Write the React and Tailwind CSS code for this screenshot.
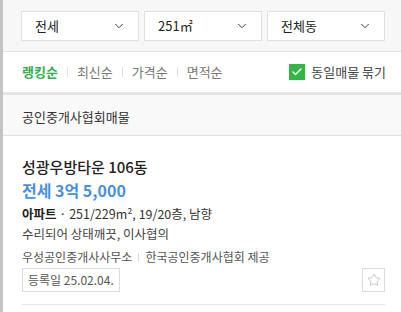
import { ChevronDown, Check, Star } from 'lucide-react'

const filters = ['전세', '251㎡', '전체동']
const sorts = ['랭킹순', '최신순', '가격순', '면적순']

export default function App() {
  return (
    <div
      className="w-[401px] h-[312px] overflow-hidden bg-white border-l-[3px] border-[#c4c4c4] text-[#222]"
      style={{ fontFamily: '"Noto Sans CJK KR", "Noto Sans", sans-serif' }}
    >
      {/* Filters */}
      <div className="h-[52px] bg-[#f7f7f7] border-b border-[#e2e2e2] pl-[18px] pr-[14px] pt-[11px] flex gap-[5px]">
        {filters.map((f) => (
          <div
            key={f}
            className="w-[118px] h-[30px] bg-white border border-[#e0e0e0] flex items-center justify-between pl-[13px] pr-[12px] text-[13px]"
          >
            <span>{f}</span>
            <ChevronDown className="h-[14px] w-[14px] text-[#333]" strokeWidth={1.6} />
          </div>
        ))}
      </div>

      {/* Sort */}
      <div className="h-[43px] flex items-center justify-between pl-[19px] pr-[15px] border-b-[3px] border-[#e4e4e4]">
        <div className="flex items-center text-[13px]">
          {sorts.map((s, i) => (
            <div key={s} className="flex items-center">
              {i > 0 && <span className="w-px h-[10px] bg-[#dedede] mx-[9px]" />}
              <span className={i === 0 ? 'text-[#2eae46] font-bold' : 'text-[#777]'}>{s}</span>
            </div>
          ))}
        </div>
        <div className="flex items-center gap-[6px] text-[13px] text-[#444]">
          <span className="w-[16px] h-[16px] bg-[#31b543] flex items-center justify-center">
            <Check className="h-[12px] w-[12px] text-white" strokeWidth={3} />
          </span>
          <span>동일매물 묶기</span>
        </div>
      </div>

      {/* Section header */}
      <div className="h-[41px] bg-[#f9f9f9] border-b border-[#e0e0e0] pl-[19px] pt-[3px] flex items-center text-[13px] text-[#333]">
        공인중개사협회매물
      </div>

      {/* Listing */}
      <div className="pl-[19px] pr-[16px] pt-[20px]">
        <div className="text-[15px] font-medium leading-[22px] text-[#222]">성광우방타운 106동</div>
        <div className="text-[16px] font-semibold leading-[25px] text-[#4a8fe0]">전세 3억 5,000</div>
        <div className="text-[12.5px] leading-[20px] mt-[1px] text-[#333]">
          <span className="font-semibold text-[#222]">아파트</span> · 251/229m², 19/20층, 남향
        </div>
        <div className="text-[12.5px] leading-[20px] text-[#444]">수리되어 상태깨끗, 이사협의</div>
        <div className="flex items-center text-[12px] leading-[20px] text-[#555] mt-[3px]">
          <span>우성공인중개사사무소</span>
          <span className="w-px h-[9px] bg-[#d8d8d8] mx-[6px]" />
          <span>한국공인중개사협회 제공</span>
        </div>
        <div className="flex items-center justify-between mt-[1px]">
          <span className="h-[24px] px-[5px] border border-[#dcdcdc] flex items-center text-[12px] text-[#555]">
            등록일 25.02.04.
          </span>
          <span className="w-[23px] h-[24px] border border-[#dcdcdc] flex items-center justify-center">
            <Star className="h-[14px] w-[14px] text-[#aaa]" strokeWidth={1.2} />
          </span>
        </div>
        <div className="border-b border-[#e6e6e6] mt-[12px]" />
      </div>
    </div>
  )
}
